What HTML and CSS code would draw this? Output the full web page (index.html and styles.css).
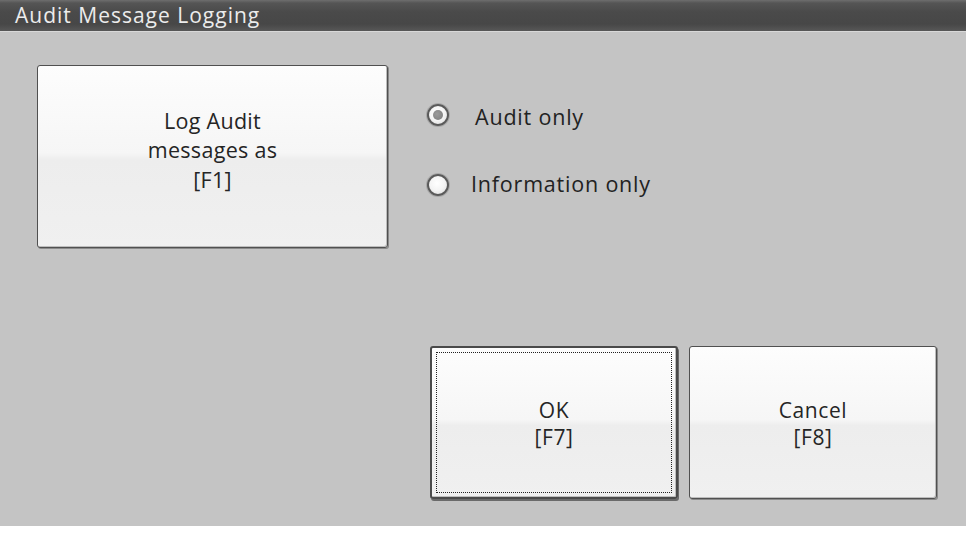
FILE: index.html
```html
<!DOCTYPE html>
<html>
<head>
<meta charset="utf-8">
<link rel="stylesheet" href="styles.css">
</head>
<body>
<div class="window">
  <div class="titlebar"><span class="title">Audit Message Logging</span></div>
  <div class="content">
    <div class="top-row">
      <button class="btn btn-log">Log Audit<br>messages as<br>[F1]</button>
      <div class="radios">
        <div class="radio-row">
          <span class="radio checked"></span>
          <span class="radio-label label-audit">Audit only</span>
        </div>
        <div class="radio-row">
          <span class="radio"></span>
          <span class="radio-label">Information only</span>
        </div>
      </div>
    </div>
    <div class="bottom-row">
      <button class="btn btn-action btn-ok"><span class="focus-ring"></span>OK<br>[F7]</button>
      <button class="btn btn-action">Cancel<br>[F8]</button>
    </div>
  </div>
</div>
</body>
</html>
```

FILE: styles.css
```css
html, body {
  margin: 0;
  padding: 0;
  background: #ffffff;
}
body {
  width: 974px;
  height: 536px;
  overflow: hidden;
  font-family: "Open Sans", "Noto Sans", "DejaVu Sans", sans-serif;
}
.window {
  width: 966px;
  height: 526px;
  background: #c4c4c4;
  display: flex;
  flex-direction: column;
}
.titlebar {
  height: 32px;
  flex: 0 0 32px;
  box-sizing: border-box;
  background: linear-gradient(to bottom, #6e6e6e 0px, #555 3px, #4a4a4a 12px, #474747 24px, #575757 31px, #4a4a4a 32px);
  border-bottom: 1px solid #d8d8d8;
  display: flex;
  align-items: center;
  padding-left: 15px;
}
.title {
  color: #ececec;
  font-size: 21px;
  letter-spacing: 1px;
  margin-top: -2px;
}
.content {
  flex: 1;
  display: flex;
  flex-direction: column;
}
.top-row {
  display: flex;
  padding: 33px 0 0 37px;
}
.btn {
  font-family: "Open Sans", "Noto Sans", "DejaVu Sans", sans-serif;
  color: #252525;
  margin: 0;
  padding: 0;
  border: 1px solid #505050;
  border-radius: 3px;
  background: linear-gradient(to bottom, #fdfdfd 0%, #f6f6f6 48%, #ededed 52%, #f0f0f0 100%);
  box-shadow: inset -1px -1px 0 #bdbdbd, 1px 1px 0 #8a8a8a;
  text-align: center;
  position: relative;
}
.btn-log {
  width: 351px;
  height: 183px;
  font-size: 21.5px;
  line-height: 29.5px;
  padding-bottom: 13px;
  letter-spacing: 0.3px;
}
.radios {
  display: flex;
  flex-direction: column;
  gap: 46px;
  margin-left: 39px;
  padding-top: 38px;
}
.radio-row {
  display: flex;
  align-items: center;
  height: 24px;
}
.radio {
  width: 18px;
  height: 18px;
  border-radius: 50%;
  border: 2px solid #5a5a5a;
  background: radial-gradient(circle at 45% 40%, #ffffff 0%, #f4f4f4 50%, #d8d8d8 100%);
  box-shadow: 0 0 0 1px #a8a8a8;
  display: flex;
  align-items: center;
  justify-content: center;
  flex: 0 0 auto;
}
.radio.checked::after {
  content: "";
  width: 10px;
  height: 10px;
  border-radius: 50%;
  background: radial-gradient(circle at 40% 40%, #9a9a9a 0%, #7a7a7a 100%);
}
.radio-label {
  font-size: 21.5px;
  color: #222;
  margin-left: 22px;
  letter-spacing: 0.8px;
}
.radio-row:first-child .radio-label {
  margin-top: 2px;
}
.radio-row:last-child .radio-label {
  margin-top: -3px;
}
.label-audit {
  margin-left: 26px;
}
.bottom-row {
  margin-top: auto;
  display: flex;
  justify-content: flex-end;
  gap: 11px;
  padding: 0 29px 27px 0;
}
.btn-action {
  width: 248px;
  height: 153px;
  font-size: 21px;
  line-height: 27.5px;
  padding-top: 3px;
  letter-spacing: 0.6px;
}
.btn-ok {
  border: 2px solid #4a4a4a;
  box-shadow: inset -1px -1px 0 #bdbdbd, 1px 2px 0 #6a6a6a;
}
.focus-ring {
  position: absolute;
  left: 4px;
  top: 4px;
  right: 4px;
  bottom: 4px;
  border: 1px dotted #222;
  pointer-events: none;
}
```
